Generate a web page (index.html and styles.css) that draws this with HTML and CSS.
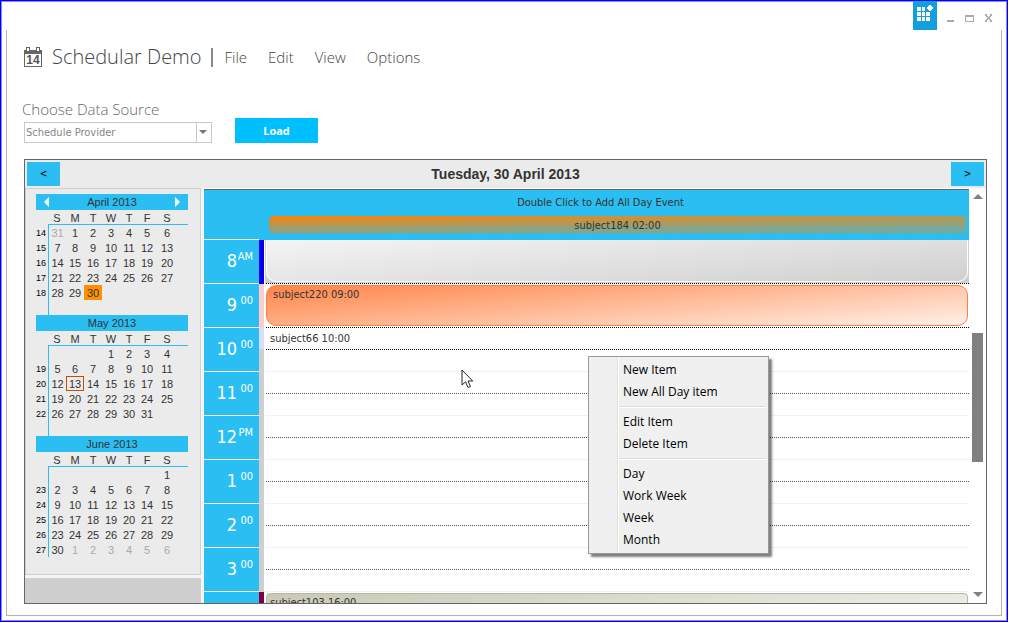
FILE: index.html
```html
<!DOCTYPE html>
<html lang="en">
<head>
<meta charset="utf-8">
<title>Schedular Demo</title>
<link rel="stylesheet" href="styles.css">
</head>
<body>
<div class="window">
  <header class="titlebar">
    <button class="tile" type="button" aria-label="Themes">
      <svg width="24" height="29" viewBox="0 0 24 29" shape-rendering="crispEdges">
        <path fill="#fff" d="M4 6h4v4H4zM9 6h3v4H9zM4 11h4v4H4zM9 11h3v4H9zM13 11h4v4h-4zM4 16h4v4H4zM9 16h3v4H9zM13 16h4v4h-4z"/>
        <path fill="#fff" d="M16 4h2v1h1v1h1v2h-1v1h-1v1h-2V9h-1V8h-1V6h1V5h1z"/>
      </svg>
    </button>
    <button class="winbtn" type="button" aria-label="Minimize"><svg width="9" height="9" viewBox="0 0 9 9" shape-rendering="crispEdges"><path fill="#aaa" d="M1 6h7v2H1z"/></svg></button>
    <button class="winbtn" type="button" aria-label="Maximize"><svg width="9" height="9" viewBox="0 0 9 9" shape-rendering="crispEdges"><path fill="#aaa" fill-rule="evenodd" d="M0 1h9v7H0zM1 3v4h7V3z"/></svg></button>
    <button class="winbtn" type="button" aria-label="Close"><svg width="9" height="9" viewBox="0 0 9 9" shape-rendering="crispEdges"><path fill="#aaa" d="M1 0h2v2h1v1h1V2h1V0h2v2H7v1H6v2h1v1h1v2H6V6H5V5H4v1H3v2H1V6h1V5h1V3H2V2H1z"/></svg></button>
  </header>
  <div class="panel">
    <div class="appbar">
      <svg class="logo" width="18" height="20" viewBox="0 0 18 20">
        <path fill="#666" fill-rule="evenodd" d="M0 3h2V0h4v3h6V0h4v3h2v17H0zM3 1v3h2V1zM13 1v3h2V1zM1 7v12h16V7z"/>
        <text x="9" y="17" text-anchor="middle" class="logo-text">14</text>
      </svg>
      <h1>Schedular Demo</h1>
      <span class="divider"></span>
      <nav class="menubar">
        <a href="#">File</a><a href="#">Edit</a><a href="#">View</a><a href="#">Options</a>
      </nav>
    </div>
    <form class="source">
      <div class="field">
        <label for="src">Choose Data Source</label>
        <div class="combo"><select id="src"><option>Schedule Provider</option></select></div>
      </div>
      <button class="load" type="button">Load</button>
    </form>
    <section class="scheduler">
      <div class="datebar">
        <button type="button">&lt;</button>
        <h2>Tuesday, 30 April 2013</h2>
        <button type="button">&gt;</button>
      </div>
      <div class="body">
        <aside class="side">
          <div class="months">
            <table class="month">
              <caption><button type="button" aria-label="Previous month" class="prev"></button>April 2013<button type="button" aria-label="Next month" class="next"></button></caption>
              <thead><tr><th></th><th>S</th><th>M</th><th>T</th><th>W</th><th>T</th><th>F</th><th>S</th></tr></thead>
              <tbody>
                <tr><th>14</th><td class="off">31</td><td>1</td><td>2</td><td>3</td><td>4</td><td>5</td><td>6</td></tr>
                <tr><th>15</th><td>7</td><td>8</td><td>9</td><td>10</td><td>11</td><td>12</td><td>13</td></tr>
                <tr><th>16</th><td>14</td><td>15</td><td>16</td><td>17</td><td>18</td><td>19</td><td>20</td></tr>
                <tr><th>17</th><td>21</td><td>22</td><td>23</td><td>24</td><td>25</td><td>26</td><td>27</td></tr>
                <tr><th>18</th><td>28</td><td>29</td><td class="picked">30</td><td></td><td></td><td></td><td></td></tr>
                <tr><th></th><td></td><td></td><td></td><td></td><td></td><td></td><td></td></tr>
              </tbody>
            </table>
            <table class="month">
              <caption>May 2013</caption>
              <thead><tr><th></th><th>S</th><th>M</th><th>T</th><th>W</th><th>T</th><th>F</th><th>S</th></tr></thead>
              <tbody>
                <tr><th></th><td></td><td></td><td></td><td>1</td><td>2</td><td>3</td><td>4</td></tr>
                <tr><th>19</th><td>5</td><td>6</td><td>7</td><td>8</td><td>9</td><td>10</td><td>11</td></tr>
                <tr><th>20</th><td>12</td><td class="today">13</td><td>14</td><td>15</td><td>16</td><td>17</td><td>18</td></tr>
                <tr><th>21</th><td>19</td><td>20</td><td>21</td><td>22</td><td>23</td><td>24</td><td>25</td></tr>
                <tr><th>22</th><td>26</td><td>27</td><td>28</td><td>29</td><td>30</td><td>31</td><td></td></tr>
                <tr><th></th><td></td><td></td><td></td><td></td><td></td><td></td><td></td></tr>
              </tbody>
            </table>
            <table class="month">
              <caption>June 2013</caption>
              <thead><tr><th></th><th>S</th><th>M</th><th>T</th><th>W</th><th>T</th><th>F</th><th>S</th></tr></thead>
              <tbody>
                <tr><th></th><td></td><td></td><td></td><td></td><td></td><td></td><td>1</td></tr>
                <tr><th>23</th><td>2</td><td>3</td><td>4</td><td>5</td><td>6</td><td>7</td><td>8</td></tr>
                <tr><th>24</th><td>9</td><td>10</td><td>11</td><td>12</td><td>13</td><td>14</td><td>15</td></tr>
                <tr><th>25</th><td>16</td><td>17</td><td>18</td><td>19</td><td>20</td><td>21</td><td>22</td></tr>
                <tr><th>26</th><td>23</td><td>24</td><td>25</td><td>26</td><td>27</td><td>28</td><td>29</td></tr>
                <tr><th>27</th><td>30</td><td class="off">1</td><td class="off">2</td><td class="off">3</td><td class="off">4</td><td class="off">5</td><td class="off">6</td></tr>
              </tbody>
            </table>
          </div>
          <div class="side-foot"></div>
        </aside>
        <div class="day">
          <div class="allday">
            <p>Double Click to Add All Day Event</p>
            <div class="allday-event">subject184 02:00</div>
          </div>
          <div class="row"><div class="hour">8<sup>AM</sup></div><div class="strip busy"></div><div class="slot shaded strong"><div class="event grey"></div></div></div>
          <div class="row"><div class="hour">9<sup>00</sup></div><div class="strip pink"></div><div class="slot strong"><div class="event orange">subject220 09:00</div></div></div>
          <div class="row"><div class="hour">10<sup>00</sup></div><div class="strip half"></div><div class="slot"><div class="half-line dark">subject66 10:00</div></div></div>
          <div class="row"><div class="hour">11<sup>00</sup></div><div class="strip"></div><div class="slot"><div class="half-line"></div></div></div>
          <div class="row"><div class="hour">12<sup>PM</sup></div><div class="strip"></div><div class="slot"><div class="half-line"></div></div></div>
          <div class="row"><div class="hour">1<sup>00</sup></div><div class="strip"></div><div class="slot"><div class="half-line"></div></div></div>
          <div class="row"><div class="hour">2<sup>00</sup></div><div class="strip"></div><div class="slot"><div class="half-line"></div></div></div>
          <div class="row"><div class="hour">3<sup>00</sup></div><div class="strip"></div><div class="slot"><div class="half-line"></div></div></div>
          <div class="row"><div class="hour"></div><div class="strip maroon"></div><div class="slot"><div class="event olive">subject103 16:00</div></div></div>
          <svg class="pointer" width="13" height="20" viewBox="0 0 13 20"><path fill="#fff" stroke="#223" d="M1 1v15l3.500-3.200 2.500 5.700 2.500-1-2.500-5.500h4.700z"/></svg>
          <div class="context" role="menu">
            <button role="menuitem" type="button">New Item</button>
            <button role="menuitem" type="button">New All Day item</button>
            <hr>
            <button role="menuitem" type="button">Edit Item</button>
            <button role="menuitem" type="button">Delete Item</button>
            <hr>
            <button role="menuitem" type="button">Day</button>
            <button role="menuitem" type="button">Work Week</button>
            <button role="menuitem" type="button">Week</button>
            <button role="menuitem" type="button">Month</button>
          </div>
        </div>
        <div class="scroll">
          <button type="button" class="up" aria-label="Scroll up"></button>
          <div class="track"><div class="thumb"></div></div>
          <button type="button" class="down" aria-label="Scroll down"></button>
        </div>
      </div>
    </section>
  </div>
</div>
</body>
</html>
```
FILE: styles.css
```css
* { box-sizing: border-box; }
html, body { margin: 0; height: 100%; background: #fff; }
body {
  padding: 0 1px 1px 0;
  font: 11px/14px "DejaVu Sans Condensed", "DejaVu Sans", sans-serif;
  color: #333;
}
button {
  border: 0; padding: 0; margin: 0; background: none;
  font: inherit; color: inherit; border-radius: 0;
}
h1, h2, p { margin: 0; font-weight: 300; }
svg { display: block; }

.window {
  height: 100%;
  display: flex; flex-direction: column;
  border: 1px solid #0000ff;
  box-shadow: inset 0 0 0 1px #8888ff;
  padding: 0 5px 5px;
}
.titlebar {
  flex: none; height: 29px;
  display: flex; justify-content: flex-end; align-items: flex-start;
  gap: 10px; padding-right: 9px;
}
.tile { background: #139fdc; margin-right: -1px; }
.winbtn { margin-top: 13px; }

.panel {
  flex: 1; min-height: 0;
  display: flex; flex-direction: column;
  border: 1px solid #b4b4b4; border-top: 0;
  padding: 0 14px 11px 17px;
}

.appbar { flex: none; display: flex; align-items: center; height: 54px; }
.logo-text { font: bold 12px "Liberation Sans", sans-serif; fill: #555; }
.appbar h1 {
  margin-left: 10px; color: #444;
  font: 300 20px/28px "Open Sans", "Noto Sans", sans-serif;
}
.divider { width: 2px; height: 19px; margin: 0 12px 0 9px; background: #888; }
.menubar { display: flex; gap: 21px; }
.menubar a {
  color: #444; text-decoration: none;
  font: 300 15px/20px "Open Sans", "Noto Sans", sans-serif;
}

.source { flex: none; display: flex; align-items: flex-end; gap: 23px; height: 59px; }
.field { width: 188px; }
.field label {
  display: block; margin-left: -2px; color: #666;
  font: 300 15px/22px "Open Sans", "Noto Sans", sans-serif;
}
.combo { position: relative; margin-top: 2px; }
.combo select {
  display: block; width: 100%; height: 21px; padding: 0 0 0 1px;
  appearance: none; border: 1px solid #c8c8c8; border-radius: 0;
  background: linear-gradient(#c8c8c8, #c8c8c8) right 14px top / 1px 100% no-repeat #fff;
  color: #888; font: 11px/14px "DejaVu Sans Condensed", "DejaVu Sans", sans-serif;
}
.combo::after {
  content: ""; position: absolute; right: 5px; top: 8px; pointer-events: none;
  border: 4px solid transparent; border-top-color: #777; border-bottom: 0;
}
.load {
  width: 83px; height: 25px; background: #00bfff; color: #fff;
  font: bold 11px/16px "Open Sans", "Noto Sans", sans-serif;
}

.scheduler {
  flex: 1; min-height: 0; margin-top: 16px;
  display: flex; flex-direction: column;
  border: 1px solid #666; overflow: hidden;
}
.datebar {
  flex: none; height: 28px; padding: 0 2px;
  display: flex; align-items: center; justify-content: space-between;
  background: #ebebeb;
}
.datebar button { width: 33px; height: 24px; background: #2abef2; color: #000; font-size: 10px; }
.datebar h2 { font: bold 14px/20px "Liberation Sans", Arial, sans-serif; }

.body { flex: 1; min-height: 0; display: flex; }
.side { flex: none; width: 179px; padding-right: 3px; background: #f5f5f5; display: flex; flex-direction: column; }
.months {
  padding: 5px 12px 17px 10px; margin-bottom: 3px;
  border: 1px solid #cfcfcf; background: #ebebeb;
}
.side-foot { flex: 1; background: #cfcfcf; }
.month {
  width: 100%; table-layout: fixed; border-collapse: separate; border-spacing: 0;
  font: 11px/14px "Liberation Sans", Arial, sans-serif;
}
.month caption { position: relative; height: 16px; line-height: 16px; background: #2abef2; }
.month th, .month td { width: 18px; padding: 0; text-align: center; font-weight: 400; }
.month th:last-child, .month td:last-child { width: auto; padding-right: 10px; }
.month thead th { height: 15px; padding-top: 2px; line-height: 12px; border-bottom: 1px solid #2abef2; }
.month thead th:first-child { width: 12px; border-bottom: 0; }
.month tbody th {
  font-size: 9px; color: #000; text-align: left; line-height: 14px;
}
.month tbody tr { height: 15px; }
.month thead th:nth-child(2), .month td:nth-child(2) { width: 18px; }
.month td:nth-child(2) { border-left: 1px solid #2abef2; }
.month .off { color: #aaa; }
.month .picked { background: #ff9000; }
.month .today { box-shadow: inset 0 0 0 1px #c05000; }
.prev, .next { position: absolute; top: 3px; border: 5px solid transparent; }
.prev { left: 8px; border-right-color: #fff; border-left: 0; }
.next { right: 8px; border-left-color: #fff; border-right: 0; }

.day { flex: 1; min-width: 0; position: relative; border-top: 1px solid #fff; overflow: hidden; }
.allday {
  height: 51px; padding: 5px 3px 5px 65px;
  background: linear-gradient(#fff, #fff) left bottom / 55px 1px no-repeat #2abef2;
  border-top: 1px solid #666;
  text-align: center; color: #333;
}
.allday p { margin-right: 34px; line-height: 16px; font-weight: 400; }
.allday-event {
  margin-top: 5px; height: 18px; line-height: 20px; border-radius: 5px;
  background:
    linear-gradient(to bottom, rgba(42,190,242,0), rgba(42,190,242,.65)),
    linear-gradient(to right, #ff8200, #ba9750);
}
.row { display: grid; grid-template-columns: 55px 5px 1fr; height: 44px; }
.hour {
  position: relative; padding: 10px 22px 0 0; text-align: right;
  background: #2abef2; color: #fff; border-bottom: 1px solid #fff;
  font-size: 18px; line-height: 22px;
}
.hour sup { position: absolute; right: 6px; top: 10px; font-size: 11px; line-height: 14px; }
.strip { background: #cfcfcf; }
.strip.busy { background: #0000f0; }
.strip.pink { background: #ffcccc; }
.strip.half { background: linear-gradient(#d8dffa 21px, #cfcfcf 21px); }
.strip.maroon { background: #800040; }
.slot { position: relative; margin-left: 1px; border-bottom: 1px solid #f2f2f2; }
.slot.strong { border-bottom: 0; padding-bottom: 1px; }
.slot.strong::after, .half-line::after {
  content: ""; position: absolute; left: 1px; right: 0; height: 1px;
  background: repeating-linear-gradient(to right, #555 0 1px, transparent 1px 2px);
}
.slot.strong::after { bottom: 0; }
.slot.strong::after, .half-line.dark::after { background: repeating-linear-gradient(to right, #000 0 1px, #fff 1px 2px); }
.half-line { height: 22px; padding: 4px 5px; }
.half-line::after { top: 21px; }
.slot.shaded { background: #cfcfcf; }
.event { margin: 0 1px; }
.event.grey {
  height: 42px; border: 1px solid #fff; border-top: 0; border-radius: 0 0 10px 10px;
  background: linear-gradient(175deg, #f4f4f4, #d0d0d0);
}
.event.orange {
  height: 41px; padding: 2px 6px; border: 1px solid #ff8040; border-radius: 10px;
  background: linear-gradient(175deg, #ff8548, #fff0e8);
}
.slot:has(.orange) { padding-top: 1px; }
.slot:has(.olive) { padding-top: 1px; }
.event.olive {
  height: 44px; padding: 2px 3px; border: 1px solid #b8b8a8; border-radius: 4px;
  background: linear-gradient(175deg, #c8c8b4, #fff);
}

.pointer { position: absolute; left: 257px; top: 180px; }
.context {
  position: absolute; left: 384px; top: 167px; width: 181px; padding: 2px;
  border: 1px solid #999; box-shadow: 3px 3px 2px rgba(0,0,0,.5);
  background: linear-gradient(to right, transparent 28px, #e0e0e0 28px 29px, #fff 29px 30px, transparent 30px) #f0f0f0;
  color: #000; font: 12px/22px "Open Sans", "Noto Sans", sans-serif;
}
.context button { display: block; width: 100%; height: 22px; padding-left: 32px; text-align: left; }
.context hr { height: 2px; margin: 3px 0 3px 28px; border: 0; background: linear-gradient(#dcdcdc 1px, #fff 1px); }

.scroll { flex: none; width: 17px; padding: 6px 3px 6px; display: flex; flex-direction: column; align-items: center; }
.up, .down { flex: none; border: 5px solid transparent; }
.up { border-bottom-color: #808080; border-top: 0; }
.down { border-top-color: #808080; border-bottom: 0; }
.track { flex: 1; align-self: stretch; min-height: 0; display: grid; grid-template-rows: 34fr 33fr 33fr; }
.thumb { grid-row: 2; background: #808080; }
```
